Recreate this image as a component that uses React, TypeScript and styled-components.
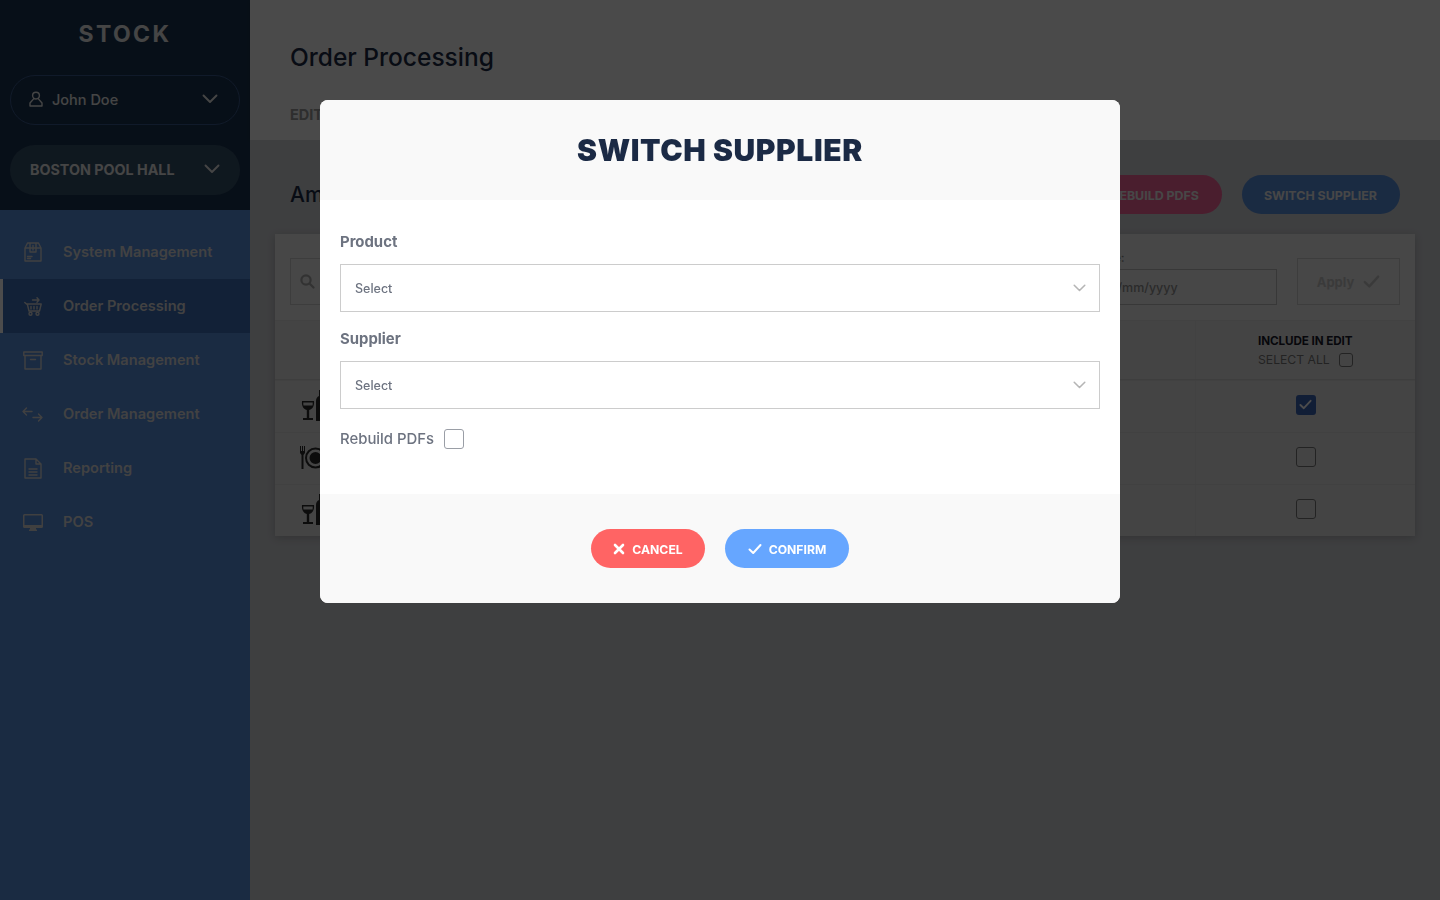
import React from "react";
import styled, { createGlobalStyle } from "styled-components";

const FONT = `Inter, "Open Sans", "Liberation Sans", sans-serif`;

const Global = createGlobalStyle`
  html, body { margin: 0; padding: 0; height: 100%; }
  body { font-family: ${FONT}; background: #d0d2d6; overflow: hidden; }
  * { box-sizing: border-box; }
`;

const Page = styled.div`
  display: flex;
  width: 1440px;
  height: 900px;
  overflow: hidden;
`;

const Sidebar = styled.aside`
  width: 250px;
  flex: none;
  display: flex;
  flex-direction: column;
  background: #588fde;
`;

const SideTop = styled.div`
  height: 210px;
  padding: 20px 10px 0;
  background: #1a3450;
  display: flex;
  flex-direction: column;
  align-items: stretch;
`;

const Logo = styled.div`
  text-align: center;
  color: #e8e8e8;
  font-size: 23px;
  line-height: 29px;
  font-weight: 700;
  letter-spacing: 2.4px;
  margin-bottom: 26px;
`;

const UserPill = styled.div`
  height: 50px;
  border: 1.5px solid #38588c;
  border-radius: 25px;
  display: flex;
  align-items: center;
  padding: 0 21px 2px 18px;
  color: #e8e8e8;
  font-size: 14.5px;
  font-weight: 500;
  gap: 9px;
  & > span { flex: 1; }
`;

const VenuePill = styled.div`
  height: 50px;
  margin-top: 20px;
  border-radius: 25px;
  background: #35506a;
  display: flex;
  align-items: center;
  padding: 0 20px 2px;
  color: #e8e8e8;
  font-size: 14.3px;
  font-weight: 700;
  & > span { flex: 1; white-space: nowrap; }
`;

const Nav = styled.nav`
  padding-top: 15px;
  display: flex;
  flex-direction: column;
`;

const NavItem = styled.div<{ $active?: boolean }>`
  height: 54px;
  display: flex;
  align-items: center;
  gap: 20px;
  padding-left: ${(p) => (p.$active ? "19px" : "22px")};
  border-left: ${(p) => (p.$active ? "3px solid #fff" : "0")};
  background: ${(p) => (p.$active ? "#3d6fb8" : "transparent")};
  color: #dcdcdc;
  font-size: 14.6px;
  font-weight: 600;
  white-space: nowrap;
`;

const IconSlot = styled.span`
  width: 21px;
  flex: none;
  display: flex;
  justify-content: center;
  color: #d8d8d8;
`;

const Main = styled.main`
  flex: 1;
  min-width: 0;
  display: flex;
  flex-direction: column;
`;

const MainHead = styled.header`
  height: 140px;
  background: #f7f7f7;
  padding: 41px 40px 0;
  box-shadow: 0 1px 3px rgba(0, 0, 0, 0.12);
`;

const PageTitle = styled.h1`
  margin: 0;
  font-size: 24.5px;
  line-height: 32px;
  font-weight: 500;
  color: #1b2b45;
`;

const Tab = styled.div`
  margin-top: 33px;
  font-size: 14.5px;
  line-height: 18px;
  font-weight: 700;
  color: #999;
`;

const Content = styled.div`
  flex: 1;
  padding: 35px 25px 0;
  background: #d0d2d6;
`;

const ActionRow = styled.div`
  height: 39px;
  padding: 0 15px;
  display: flex;
  align-items: center;
  gap: 20px;
`;

const SubTitle = styled.h2`
  flex: 1;
  margin: 0;
  font-size: 21px;
  font-weight: 500;
  color: #1b2b45;
`;

const Pill = styled.div<{ $bg: string }>`
  height: 39px;
  padding: 1px 23px 0 22px;
  border-radius: 20px;
  display: flex;
  align-items: center;
  background: ${(p) => p.$bg};
  color: #eee;
  font-size: 12.4px;
  font-weight: 700;
  white-space: nowrap;
`;

const Card = styled.section`
  margin-top: 20px;
  background: #ededed;
  box-shadow: 0 2px 8px rgba(0, 0, 0, 0.18);
`;

const FilterRow = styled.div`
  height: 86px;
  padding: 24px 15px 15px;
  display: flex;
  align-items: flex-end;
  gap: 20px;
`;

const SearchBox = styled.div`
  flex: 1;
  height: 47px;
  border: 1px solid #ccc;
  background: #ededed;
  display: flex;
  align-items: center;
  padding-left: 9px;
  color: #a8a8a8;
`;

const DateColumn = styled.div`
  width: 240px;
  display: flex;
  flex-direction: column;
`;

const DateLabel = styled.div`
  padding-left: 57px;
  font-size: 12px;
  line-height: 15px;
  margin-bottom: 4px;
  font-weight: 600;
  color: #888;
`;

const DateField = styled.div`
  height: 36px;
  border: 1px solid #bbb;
  display: flex;
  align-items: center;
  padding-left: 64px;
  font-size: 12.5px;
  font-weight: 500;
  color: #909090;
`;

const ApplyBtn = styled.div`
  width: 103px;
  height: 47px;
  border: 1px solid #ccc;
  display: flex;
  align-items: center;
  justify-content: center;
  gap: 9px;
  color: #c4c4c4;
  font-size: 13px;
  font-weight: 700;
`;

const Row = styled.div<{ $head?: boolean }>`
  display: grid;
  grid-template-columns: 1fr 220px;
  height: ${(p) => (p.$head ? "60px" : "52px")};
  background: #e4e4e4;
  border-top: 1px solid ${(p) => (p.$head ? "#ddd" : "#dadada")};
  ${(p) => p.$head && "border-bottom: 1px solid #cfcfcf;"}
`;

const IconCell = styled.div`
  display: flex;
  align-items: center;
  padding: 0 0 2px 25px;
  color: #2a2a2a;
`;

const CheckCell = styled.div`
  border-left: 1px solid #dcdcdc;
  display: flex;
  align-items: center;
  justify-content: center;
  padding-bottom: 4px;
`;

const HeadCell = styled.div`
  border-left: 1px solid #dcdcdc;
  padding: 13px 0 0 62px;
`;

const HeadLabel = styled.div`
  font-size: 11.7px;
  line-height: 14px;
  font-weight: 700;
  color: #1a1a2a;
  letter-spacing: -0.1px;
  white-space: nowrap;
`;

const SelectAll = styled.div`
  margin-top: 5px;
  display: flex;
  align-items: center;
  gap: 9px;
  font-size: 12.2px;
  line-height: 14px;
  color: #777;
`;

const Box = styled.div<{ $size?: number; $on?: boolean; $line?: string }>`
  width: ${(p) => p.$size ?? 20}px;
  height: ${(p) => p.$size ?? 20}px;
  border-radius: 3px;
  flex: none;
  display: flex;
  align-items: center;
  justify-content: center;
  background: ${(p) => (p.$on ? "#3a64b4" : "transparent")};
  border: ${(p) => (p.$on ? "0" : `1px solid ${p.$line ?? "#777"}`)};
  color: #fff;
`;

const Overlay = styled.div`
  position: fixed;
  inset: 0;
  background: rgba(0, 0, 0, 0.7);
  display: flex;
  justify-content: center;
  align-items: flex-start;
  padding-top: 100px;
`;

const Modal = styled.div`
  width: 800px;
  height: 503px;
  border-radius: 8px;
  overflow: hidden;
  background: #fff;
  display: flex;
  flex-direction: column;
`;

const ModalHead = styled.div`
  height: 100px;
  background: #f9f9f9;
  display: flex;
  align-items: center;
  justify-content: center;
`;

const ModalTitle = styled.h3`
  margin: 0;
  font-size: 30px;
  font-weight: 900;
  color: #1b2a45;
  letter-spacing: 0.6px;
  white-space: nowrap;
`;

const ModalBody = styled.div`
  flex: 1;
  padding: 32px 20px 0;
`;

const FieldLabel = styled.div`
  font-size: 14.9px;
  line-height: 20px;
  font-weight: 700;
  color: #6d7380;
  margin-bottom: 12px;
`;

const SelectBox = styled.div`
  height: 48px;
  border: 1px solid #ccc;
  margin-bottom: 17px;
  padding: 0 13px 0 14px;
  display: flex;
  align-items: center;
  justify-content: space-between;
  font-size: 12.5px;
  font-weight: 500;
  color: #6d7380;
`;

const CheckRow = styled.div`
  height: 20px;
  margin-top: 20px;
  display: flex;
  align-items: center;
  gap: 10px;
  font-size: 14.9px;
  font-weight: 500;
  color: #6d7380;
`;

const ModalFoot = styled.div`
  height: 109px;
  background: #f9f9f9;
  padding-top: 35px;
  display: flex;
  justify-content: center;
  gap: 20px;
`;

const FootBtn = styled.div<{ $bg: string; $w: number }>`
  width: ${(p) => p.$w}px;
  height: 39px;
  padding-top: 1px;
  border-radius: 20px;
  background: ${(p) => p.$bg};
  color: #fff;
  font-size: 12.2px;
  font-weight: 700;
  display: flex;
  align-items: center;
  justify-content: center;
  gap: 7px;
`;

const Chevron = ({ c = "currentColor", w = 16 }: { c?: string; w?: number }) => (
  <svg width={w} height={w * 0.6} viewBox="0 0 16 9.6" fill="none" stroke={c} strokeWidth="1.9" strokeLinecap="round" strokeLinejoin="round">
    <path d="M1.5 1.5 8 8l6.5-6.5" />
  </svg>
);

const Tick = ({ s = 14, w = 2 }: { s?: number; w?: number }) => (
  <svg width={s} height={s} viewBox="0 0 14 14" fill="none" stroke="currentColor" strokeWidth={w} strokeLinecap="round" strokeLinejoin="round">
    <path d="M1.5 7.5 5.2 11 12.5 3" />
  </svg>
);

const Ic = styled.svg.attrs({ fill: "none", stroke: "currentColor", strokeWidth: 1.4, strokeLinejoin: "round", strokeLinecap: "round" })`
  flex: none;
`;

const UserIcon = () => (
  <Ic width="14" height="16" viewBox="0 0 14 16">
    <circle cx="7" cy="4.6" r="3.4" />
    <path d="M4.8 7.6 1 12v3h12v-3L9.2 7.6" />
  </Ic>
);

const BoxIcon = () => (
  <Ic width="18" height="20" viewBox="0 0 18 20">
    <path d="M1 6 3.500 1h11L17 6v13H1zM1 6h16M6 1v9h6V1M9 3.500V8M3.500 14.500h4.500M3.500 16.500h3" />
  </Ic>
);

const CartIcon = () => (
  <Ic width="18" height="19" viewBox="0 0 18 19">
    <path d="M.8 5.500 2.500 7h14.700l-1.700 7H5L3.300 7M7 9.500v2.500M10 9.500v2.500M13 9.500v2.500M8.500 3h6.500M13 .8 15 3l-2 2.200" />
    <circle cx="6.500" cy="16.800" r="1.500" />
    <circle cx="13.500" cy="16.800" r="1.500" />
  </Ic>
);

const ArchiveIcon = () => (
  <Ic width="20" height="19" viewBox="0 0 20 19">
    <path d="M.8 1h18.400v3.500H.8zM2 4.500V18h16V4.500M7.500 8.500h5" />
  </Ic>
);

const SwapIcon = () => (
  <Ic width="21" height="15" viewBox="0 0 21 15">
    <path d="M1 4.500h9M4.500 1 1 4.500 4.500 8M11 10.500h9M16.500 7l3.500 3.500L16.500 14" />
  </Ic>
);

const DocIcon = () => (
  <Ic width="18" height="21" viewBox="0 0 18 21">
    <path d="M1 1h11l5 5v14H1zM12 1v5h5M5 11h8M5 14h8M5 17h8" />
  </Ic>
);

const ScreenIcon = () => (
  <svg width="20" height="17" viewBox="0 0 20 17" fill="currentColor" style={{ flex: "none" }}>
    <path d="M1.500 0h17A1.500 1.500 0 0 1 20 1.500v11a1.500 1.500 0 0 1-1.500 1.500H13v1.500h1V17H6v-1.500h1V14H1.500A1.500 1.500 0 0 1 0 12.500v-11A1.500 1.500 0 0 1 1.500 0ZM1.500 1.500v9.500h17V1.500z" />
  </svg>
);

const SearchIcon = () => (
  <svg width="15" height="15" viewBox="0 0 15 15" fill="none" stroke="currentColor" strokeWidth="2.200" strokeLinecap="round">
    <circle cx="6" cy="6" r="4.600" />
    <path d="m9.500 9.500 4 4" />
  </svg>
);

const WineIcon = () => (
  <svg width="26" height="31" viewBox="0 0 26 31" fill="currentColor">
    <path fillRule="evenodd" d="M2 11h12c.5 4.500-1 8-4.800 9v8H13v2H3v-2h3.800v-8C3 19 1.500 15.500 2 11Zm1.300 1.500c-.1 1 0 2 .2 3h9c.2-1 .3-2 .2-3z" />
    <path d="M19 0h3v6c2 1 3 2.500 3 5v20h-9V11c0-2.500 1-4 3-5z" />
  </svg>
);

const PlateIcon = () => (
  <svg width="26" height="24" viewBox="0 0 26 24" fill="currentColor">
    <path d="M0 0h1v5h1V0h1v5h1V0h1v7L3.500 9v14h-2V9L0 7z" />
    <path fillRule="evenodd" d="M15.500 1.500a10.500 10.500 0 1 1 0 21 10.500 10.500 0 0 1 0-21Zm0 2a8.500 8.500 0 1 0 0 17 8.500 8.500 0 0 0 0-17ZM15.500 6a6 6 0 1 1 0 12 6 6 0 0 1 0-12Z" />
  </svg>
);

const XIcon = () => (
  <svg width="12" height="12" viewBox="0 0 12 12" fill="none" stroke="currentColor" strokeWidth="2.600" strokeLinecap="round">
    <path d="m2 2 8 8M10 2l-8 8" />
  </svg>
);

const navItems = [
  { label: "System Management", icon: <BoxIcon /> },
  { label: "Order Processing", icon: <CartIcon />, active: true },
  { label: "Stock Management", icon: <ArchiveIcon /> },
  { label: "Order Management", icon: <SwapIcon /> },
  { label: "Reporting", icon: <DocIcon /> },
  { label: "POS", icon: <ScreenIcon /> },
];

export default function App() {
  return (
    <>
      <Global />
      <Page>
        <Sidebar>
          <SideTop>
            <Logo>STOCK</Logo>
            <UserPill>
              <UserIcon />
              <span>John Doe</span>
              <Chevron c="#e8e8e8" />
            </UserPill>
            <VenuePill>
              <span>BOSTON POOL HALL</span>
              <Chevron c="#e8e8e8" />
            </VenuePill>
          </SideTop>
          <Nav>
            {navItems.map((n) => (
              <NavItem key={n.label} $active={n.active}>
                <IconSlot>{n.icon}</IconSlot>
                {n.label}
              </NavItem>
            ))}
          </Nav>
        </Sidebar>
        <Main>
          <MainHead>
            <PageTitle>Order Processing</PageTitle>
            <Tab>EDIT</Tab>
          </MainHead>
          <Content>
            <ActionRow>
              <SubTitle>Amend Order</SubTitle>
              <Pill $bg="#f8649c">REBUILD PDFS</Pill>
              <Pill $bg="#588fde">SWITCH SUPPLIER</Pill>
            </ActionRow>
            <Card>
              <FilterRow>
                <SearchBox>
                  <SearchIcon />
                </SearchBox>
                <DateColumn>
                  <DateLabel>Date:</DateLabel>
                  <DateField>dd/mm/yyyy</DateField>
                </DateColumn>
                <ApplyBtn>
                  Apply
                  <Tick s={17} />
                </ApplyBtn>
              </FilterRow>
              <Row $head>
                <div />
                <HeadCell>
                  <HeadLabel>INCLUDE IN EDIT</HeadLabel>
                  <SelectAll>
                    SELECT ALL
                    <Box $size={14} />
                  </SelectAll>
                </HeadCell>
              </Row>
              <Row>
                <IconCell>
                  <WineIcon />
                </IconCell>
                <CheckCell>
                  <Box $on>
                    <Tick s={13} />
                  </Box>
                </CheckCell>
              </Row>
              <Row>
                <IconCell>
                  <PlateIcon />
                </IconCell>
                <CheckCell>
                  <Box />
                </CheckCell>
              </Row>
              <Row>
                <IconCell>
                  <WineIcon />
                </IconCell>
                <CheckCell>
                  <Box />
                </CheckCell>
              </Row>
            </Card>
          </Content>
        </Main>
      </Page>
      <Overlay>
        <Modal>
          <ModalHead>
            <ModalTitle>SWITCH SUPPLIER</ModalTitle>
          </ModalHead>
          <ModalBody>
            <FieldLabel>Product</FieldLabel>
            <SelectBox>
              Select
              <Chevron c="#b5b5b5" w={13} />
            </SelectBox>
            <FieldLabel>Supplier</FieldLabel>
            <SelectBox>
              Select
              <Chevron c="#b5b5b5" w={13} />
            </SelectBox>
            <CheckRow>
              Rebuild PDFs
              <Box $line="#9a9ea6" />
            </CheckRow>
          </ModalBody>
          <ModalFoot>
            <FootBtn $bg="#ff6464" $w={114}>
              <XIcon />
              CANCEL
            </FootBtn>
            <FootBtn $bg="#66a6ff" $w={124}>
              <Tick s={14} />
              CONFIRM
            </FootBtn>
          </ModalFoot>
        </Modal>
      </Overlay>
    </>
  );
}
